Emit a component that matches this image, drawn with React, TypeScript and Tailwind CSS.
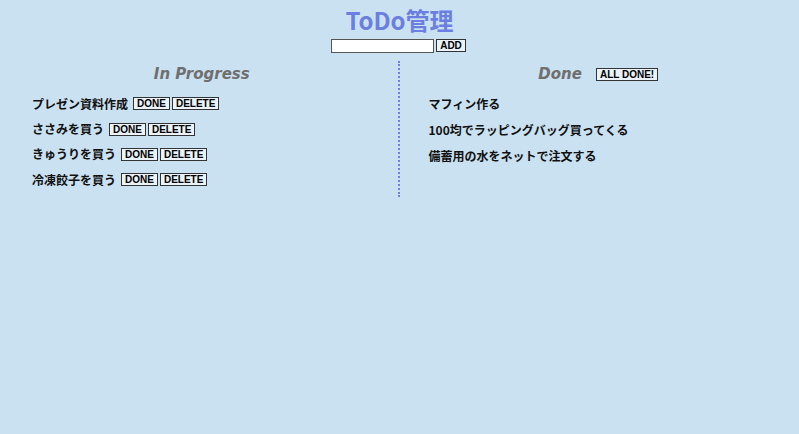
import React from "react";

const inProgress = ["プレゼン資料作成", "ささみを買う", "きゅうりを買う", "冷凍餃子を買う"];
const done = ["マフィン作る", "100均でラッピングバッグ買ってくる", "備蓄用の水をネットで注文する"];

const jp = { fontFamily: '"Noto Sans CJK JP", "Noto Sans", sans-serif' };
const heading = { fontFamily: '"DejaVu Sans", sans-serif' };

const Btn = ({ children }: { children: React.ReactNode }) => (
  <button
    className="h-[13px] border border-[#333] bg-[#eaf3f9] px-[3px] text-[10px] font-bold leading-[11px] text-black"
    style={{ fontFamily: '"Liberation Sans", sans-serif' }}
  >
    {children}
  </button>
);

export default function App() {
  return (
    <div className="min-h-[434px] w-full bg-[#cae1f1]" style={jp}>
      <h1 className="pt-[5px] text-center text-[24px] font-bold leading-[30px] text-[#6a7fe0]">ToDo管理</h1>
      <div className="mt-[4px] flex justify-center gap-[2px] pr-[2px]">
        <input className="h-[14px] w-[103px] border border-[#555] bg-white" />
        <Btn>ADD</Btn>
      </div>
      <div className="mt-[8px] flex">
        <div className="h-[136px] w-1/2 border-r-2 border-dotted border-[#6f80e4]">
          <h2
            className="mt-[2px] pl-[6px] text-center text-[15px] font-bold italic leading-[22px] text-[#6f6f6f]"
            style={heading}
          >
            In Progress
          </h2>
          <ul className="mt-[6px] flex flex-col pl-[32px]">
            {inProgress.map((t) => (
              <li key={t} className="flex h-[25.4px] items-center gap-[5px] text-[12px] font-bold text-[#111]">
                <span>{t}</span>
                <span className="flex gap-[2px]">
                  <Btn>DONE</Btn>
                  <Btn>DELETE</Btn>
                </span>
              </li>
            ))}
          </ul>
        </div>
        <div className="w-1/2">
          <div className="mt-[2px] flex items-center justify-center gap-[14px] pr-[2px]">
            <h2 className="text-[15px] font-bold italic leading-[22px] text-[#6f6f6f]" style={heading}>
              Done
            </h2>
            <Btn>ALL DONE!</Btn>
          </div>
          <ul className="mt-[6px] flex flex-col pl-[29px]">
            {done.map((t) => (
              <li key={t} className="flex h-[26px] items-center text-[12px] font-bold text-[#111]">
                {t}
              </li>
            ))}
          </ul>
        </div>
      </div>
    </div>
  );
}
